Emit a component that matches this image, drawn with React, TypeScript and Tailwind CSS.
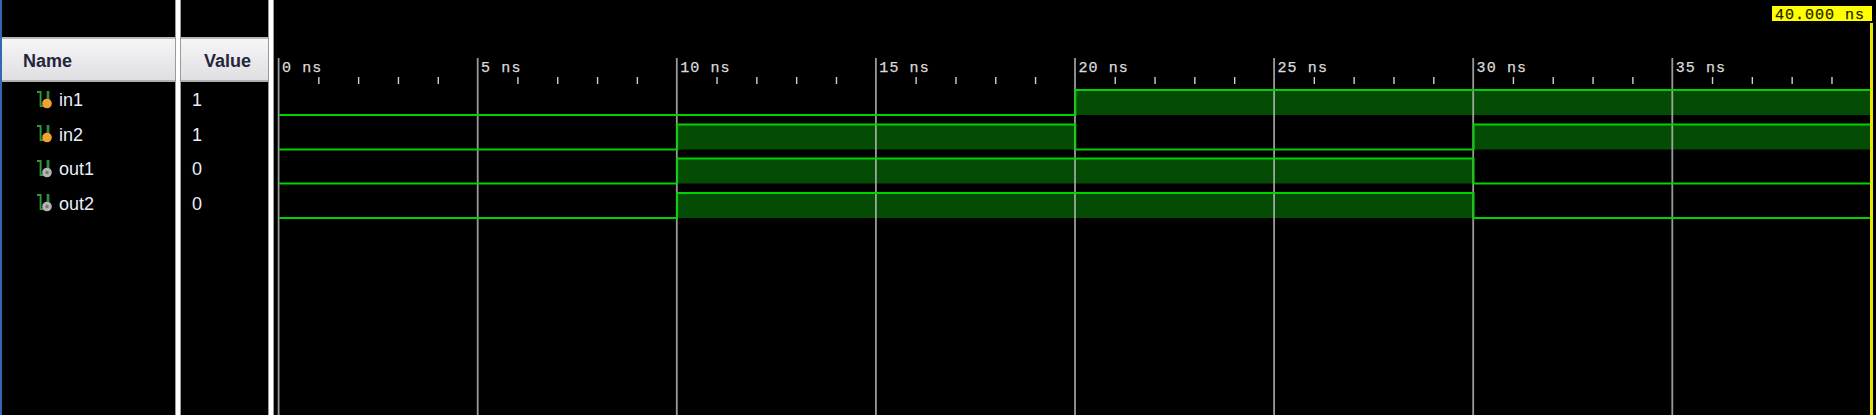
import React from "react";

// one clock period is 5 ns, 199.1px on screen
const NS = 39.82;
const X0 = 5; // 0 ns inside the wave svg (svg starts at x=274)
const END = 1596; // where the waves stop, cursor sits right after

type Signal = {
  name: string;
  value: string;
  kind: "in" | "out";
  high: number; // y of the high level
  low: number; // y of the low level
  edges: number[][]; // ranges in ns where the signal is high
};

const signals: Signal[] = [
  { name: "in1", value: "1", kind: "in", high: 90, low: 115, edges: [[20, 40]] },
  { name: "in2", value: "1", kind: "in", high: 124.5, low: 149.5, edges: [[10, 20], [30, 40]] },
  { name: "out1", value: "0", kind: "out", high: 158.5, low: 183.5, edges: [[10, 30]] },
  { name: "out2", value: "0", kind: "out", high: 193, low: 218, edges: [[10, 30]] },
];

const toX = (ns: number) => Math.min(X0 + ns * NS, END);

function wavePath(s: Signal) {
  let d = `M${X0} ${s.low}`;
  for (const [from, to] of s.edges) {
    d += ` L${toX(from)} ${s.low} L${toX(from)} ${s.high} L${toX(to)} ${s.high}`;
    if (to < 40) d += ` L${toX(to)} ${s.low}`;
  }
  const lastTo = s.edges[s.edges.length - 1][1];
  if (lastTo < 40) d += ` L${END} ${s.low}`;
  return d;
}

function SignalIcon({ kind }: { kind: "in" | "out" }) {
  return (
    <svg width="18" height="20" viewBox="0 0 18 20" className="shrink-0">
      <path d="M0 1H3.6V15H8" fill="none" stroke="#2f9a3c" strokeWidth="1.9" />
      <path d="M11 0V10" fill="none" stroke="#2c8a38" strokeWidth="2.8" />
      {kind === "in" ? (
        <circle cx="10" cy="12.5" r="4.8" fill="#f5a033" />
      ) : (
        <>
          <circle cx="10" cy="12.5" r="4.8" fill="#b4b4b4" />
          <circle cx="10" cy="12.5" r="1.7" fill="#777777" />
        </>
      )}
    </svg>
  );
}

function Divider() {
  return <div className="w-[6px] shrink-0 border-x border-[#9a9a9a] bg-white" />;
}

function HeaderCell({ label, className }: { label: string; className: string }) {
  return (
    <div
      className={`flex h-[45px] items-center border-y-2 border-t-[#b9b9b9] border-b-[#b0b0b0] bg-gradient-to-b from-[#f6f6f7] to-[#dfdfe3] pt-[3px] text-[18px] font-bold text-[#26263a] ${className}`}
    >
      {label}
    </div>
  );
}

export default function App() {
  return (
    <div className="flex h-[415px] w-[1876px] overflow-hidden bg-black font-['Liberation_Sans',Arial,sans-serif]">
      {/* Name column */}
      <div className="w-[175px] shrink-0 border-l-2 border-[#3566b4] pt-[37px]">
        <HeaderCell label="Name" className="pl-[21px]" />
        <div className="pt-[1.4px]">
          {signals.map((s) => (
            <div key={s.name} className="flex h-[34.5px] items-center pl-[35px] text-[18px] text-[#e8eefa]">
              <SignalIcon kind={s.kind} />
              <span className="ml-[4px]">{s.name}</span>
            </div>
          ))}
        </div>
      </div>
      <Divider />

      {/* Value column */}
      <div className="w-[87px] shrink-0 pt-[37px]">
        <HeaderCell label="Value" className="pl-[23px]" />
        <div className="pt-[1.4px]">
          {signals.map((s) => (
            <div key={s.name} className="flex h-[34.5px] items-center pl-[11px] text-[18px] text-[#e8eefa]">
              {s.value}
            </div>
          ))}
        </div>
      </div>
      <Divider />

      {/* Waveform */}
      <svg width="1602" height="415" viewBox="0 0 1602 415" className="shrink-0">
        {signals.map((s) =>
          s.edges.map(([from, to]) => (
            <rect
              key={s.name + from}
              x={toX(from)}
              y={s.high}
              width={toX(to) - toX(from)}
              height={s.low - s.high}
              fill="#044c04"
            />
          ))
        )}

        {[0, 5, 10, 15, 20, 25, 30, 35].map((ns) => (
          <g key={ns}>
            <line x1={toX(ns) - 0.4} x2={toX(ns) - 0.4} y1="58" y2="415" stroke="#c0c0c0" strokeWidth="1.8" strokeOpacity="0.8" />
            <text
              x={toX(ns) + 3}
              y="72"
              fill="#dcdcdc"
              stroke="#dcdcdc"
              strokeWidth="0.25"
              fontSize="15"
              fontFamily="'Liberation Mono', monospace"
              letterSpacing="1.1"
            >
              {ns} ns
            </text>
            {[1, 2, 3, 4].map((i) => (
              <line
                key={i}
                x1={toX(ns + i)}
                x2={toX(ns + i)}
                y1="77"
                y2="84"
                stroke="#d0d0d0"
                strokeWidth="1.4"
              />
            ))}
          </g>
        ))}

        {signals.map((s) => (
          <path key={s.name} d={wavePath(s)} fill="none" stroke="#00d400" strokeWidth="1.8" />
        ))}

        {/* cursor */}
        <rect x="1498" y="6" width="100" height="15" fill="#ffff00" />
        <text
          x="1501"
          y="18.5"
          fill="#222200"
          stroke="#222200"
          strokeWidth="0.25"
          fontSize="15"
          fontFamily="'Liberation Mono', monospace"
          letterSpacing="1"
        >
          40.000 ns
        </text>
        <rect x="1596" y="23" width="3" height="392" fill="#e6e600" />
      </svg>
    </div>
  );
}
